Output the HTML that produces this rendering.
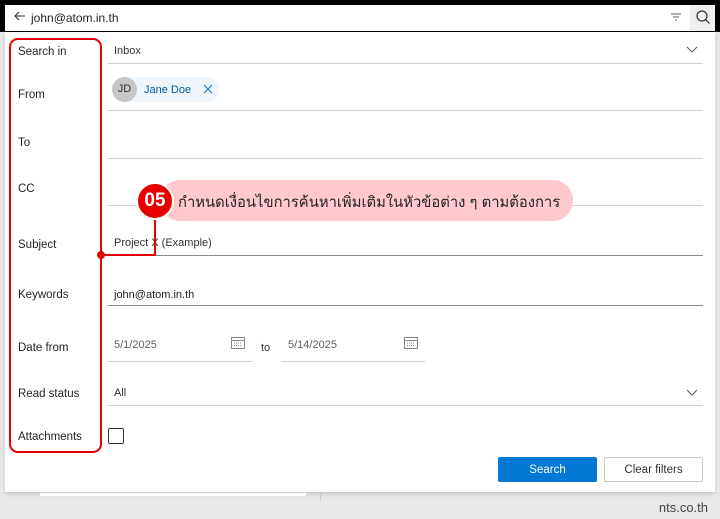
<!DOCTYPE html>
<html><head><meta charset="utf-8"><style>
*{margin:0;padding:0;box-sizing:border-box}
body{width:720px;height:519px;background:#e8e8e8;position:relative;overflow:hidden;font-family:"Liberation Sans","Noto Sans CJK SC",sans-serif;color:#323130}
.a{position:absolute}
.lbl{position:absolute;left:18px;font-size:11.5px;color:#252423}
.ln{position:absolute;height:1px;background:#d2d0ce}
.val{position:absolute;font-size:11px;color:#323130}
</style></head><body>
<div class="a" style="left:0;top:0;width:720px;height:5px;background:#000"></div>
<div class="a" style="left:715px;top:0;width:5px;height:32px;background:#000"></div>
<div class="a" style="left:0;top:0;width:5px;height:32px;background:#000"></div>
<div class="a" style="left:5px;top:5px;width:710px;height:26px;background:#fff"></div>
<div class="a" style="left:690px;top:5px;width:25px;height:26px;background:#f0f0f0"></div>
<div class="a" style="left:0;top:31px;width:720px;height:1px;background:#000"></div>
<svg class="a" style="left:13px;top:10px" width="14" height="12"><path d="M12 6H2M6 2L2 6L6 10" stroke="#323130" fill="none" stroke-width="1.1"/></svg>
<div class="a" style="left:31px;top:11px;font-size:12px;color:#201f1e">john@atom.in.th</div>
<svg class="a" style="left:670px;top:12px" width="12" height="10"><path d="M1 2H11M3 5H9M5 8H7" stroke="#605e5c" stroke-width="1"/></svg>
<svg class="a" style="left:695px;top:9px" width="16" height="16"><circle cx="7" cy="7" r="5" stroke="#323130" fill="none" stroke-width="1.2"/><path d="M10.5 10.5L14.5 14.5" stroke="#323130" stroke-width="1.2"/></svg>
<div class="a" style="left:5px;top:32px;width:710px;height:460px;background:#fff;box-shadow:0 2px 4px rgba(0,0,0,.15)"></div>
<div class="a" style="left:40px;top:492px;width:266px;height:4px;background:#fafafa;border-top:1px solid #ccc"></div>
<div class="a" style="left:320px;top:492px;width:1px;height:8px;background:#ccc"></div>
<div class="a" style="right:12px;top:500px;font-size:13px;color:#444">nts.co.th</div>

<div class="lbl" style="top:46px">Search in</div>
<div class="lbl" style="top:89px">From</div>
<div class="lbl" style="top:137px">To</div>
<div class="lbl" style="top:183px">CC</div>
<div class="lbl" style="top:239px">Subject</div>
<div class="lbl" style="top:289px">Keywords</div>
<div class="lbl" style="top:342px">Date from</div>
<div class="lbl" style="top:388px">Read status</div>
<div class="lbl" style="top:431px">Attachments</div>

<div class="val" style="left:114px;top:45px">Inbox</div>
<svg class="a" style="left:686px;top:46px" width="12" height="8"><path d="M1 1L6 6L11 1" stroke="#605e5c" fill="none"/></svg>
<div class="ln" style="left:108px;top:63px;width:595px"></div>
<div class="a" style="left:112px;top:77px;width:108px;height:25px;border-radius:13px;background:#eff6fc"></div>
<div class="a" style="left:112px;top:77px;width:25px;height:25px;border-radius:50%;background:#c8c6c4;font-size:11px;text-align:center;line-height:25px;color:#323130">JD</div>
<div class="a" style="left:144px;top:84px;font-size:11px;color:#005a9e">Jane Doe</div>
<svg class="a" style="left:203px;top:84px" width="10" height="10"><path d="M1 1L9 9M9 1L1 9" stroke="#106ebe" stroke-width="1"/></svg>
<div class="ln" style="left:108px;top:110px;width:595px"></div>
<div class="ln" style="left:108px;top:158px;width:595px"></div>
<div class="ln" style="left:108px;top:205px;width:595px"></div>
<div class="val" style="left:114px;top:237px">Project X (Example)</div>
<div class="ln" style="left:108px;top:255px;width:595px;background:#8a8886"></div>
<div class="val" style="left:114px;top:289px;color:#201f1e">john@atom.in.th</div>
<div class="ln" style="left:108px;top:305px;width:595px;background:#8a8886"></div>
<div class="val" style="left:114px;top:339px;color:#605e5c">5/1/2025</div>
<svg class="a" style="left:231px;top:336px" width="14" height="13"><rect x="0.5" y="1.5" width="13" height="11" fill="none" stroke="#8a8886"/><path d="M0.5 4.5H13.5" stroke="#8a8886"/><path d="M3 7H11M3 9.5H11" stroke="#8a8886" stroke-dasharray="1 1"/></svg>
<div class="ln" style="left:108px;top:361px;width:144px"></div>
<div class="val" style="left:261px;top:342px">to</div>
<div class="val" style="left:288px;top:339px;color:#605e5c">5/14/2025</div>
<svg class="a" style="left:404px;top:336px" width="14" height="13"><rect x="0.5" y="1.5" width="13" height="11" fill="none" stroke="#8a8886"/><path d="M0.5 4.5H13.5" stroke="#8a8886"/><path d="M3 7H11M3 9.5H11" stroke="#8a8886" stroke-dasharray="1 1"/></svg>
<div class="ln" style="left:281px;top:361px;width:144px"></div>
<div class="val" style="left:114px;top:387px">All</div>
<svg class="a" style="left:686px;top:389px" width="12" height="8"><path d="M1 1L6 6L11 1" stroke="#605e5c" fill="none"/></svg>
<div class="ln" style="left:108px;top:405px;width:595px"></div>
<div class="a" style="left:108px;top:428px;width:16px;height:16px;border:1px solid #323130;border-radius:2px"></div>
<div class="a" style="left:498px;top:457px;width:99px;height:25px;background:#0078d4;border-radius:2px;color:#fff;font-size:11.5px;text-align:center;line-height:27px">Search</div>
<div class="a" style="left:604px;top:457px;width:99px;height:25px;border:1px solid #c8c6c4;border-radius:2px;font-size:11.5px;text-align:center;line-height:25px">Clear filters</div>

<div class="a" style="left:9px;top:38px;width:93px;height:415px;border:2px solid #e60000;border-radius:9px"></div>
<div class="a" style="left:101px;top:254px;width:55px;height:2px;background:#e60000"></div>
<div class="a" style="left:154px;top:218px;width:2px;height:38px;background:#e60000"></div>
<div class="a" style="left:97px;top:251px;width:8px;height:8px;border-radius:50%;background:#e60000"></div>
<div class="a" style="left:160px;top:180px;width:413px;height:41px;background:#ffc9ce;border-radius:20px"></div>
<div class="a" style="left:178px;top:190px;font-size:14.8px;color:#222;white-space:nowrap">กำหนดเงื่อนไขการค้นหาเพิ่มเติมในหัวข้อต่าง ๆ ตามต้องการ</div>
<div class="a" style="left:136px;top:182px;width:38px;height:38px;border-radius:50%;background:#e60000;border:2px solid #fff;color:#fff;font-size:19px;font-weight:bold;text-align:center;line-height:34px">05</div>
</body></html>
